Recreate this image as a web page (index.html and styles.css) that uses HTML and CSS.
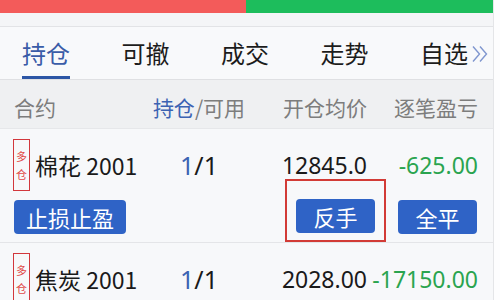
FILE: index.html
```html
<!DOCTYPE html>
<html lang="zh">
<head>
<meta charset="utf-8">
<link rel="stylesheet" href="styles.css">
</head>
<body>
<div class="page">
  <div class="topbar">
    <div class="buy"></div>
    <div class="sell"></div>
  </div>
  <div class="band"></div>
  <nav class="tabs">
    <div class="tab active">持仓</div>
    <div class="tab">可撤</div>
    <div class="tab">成交</div>
    <div class="tab">走势</div>
    <div class="tab">自选<svg class="more" width="18" height="18" viewBox="0 0 18 18"><path d="M2 1.5 L8.5 9 L2 16.5 M9 1.5 L15.5 9 L9 16.5" fill="none" stroke="#7f96cf" stroke-width="1.4"/></svg></div>
  </nav>
  <div class="head grid">
    <div class="c1">合约</div>
    <div class="c2"><span class="blue">持仓</span>/可用</div>
    <div class="c3">开仓均价</div>
    <div class="c4">逐笔盈亏</div>
  </div>
  <div class="row">
    <div class="grid line">
      <div class="c1 name"><span class="tag">多<br>仓</span>棉花 2001</div>
      <div class="c2 num"><span class="blue">1</span>/1</div>
      <div class="c3 num">12845.0</div>
      <div class="c4 num green">-625.00</div>
    </div>
    <div class="actions">
      <button class="btn wide">止损止盈</button>
      <div class="spacer"></div>
      <div class="hl"><button class="btn">反手</button></div>
      <button class="btn">全平</button>
    </div>
  </div>
  <div class="row">
    <div class="grid line">
      <div class="c1 name"><span class="tag">多<br>仓</span>焦炭 2001</div>
      <div class="c2 num"><span class="blue">1</span>/1</div>
      <div class="c3 num">2028.00</div>
      <div class="c4 num green">-17150.00</div>
    </div>
  </div>
</div>
</body>
</html>
```

FILE: styles.css
```css
* { box-sizing: border-box; margin: 0; padding: 0; }
html, body { background: #fdfdfe; }
body {
  width: 500px;
  height: 300px;
  overflow: hidden;
  font-family: "Noto Sans CJK SC", "Noto Sans", sans-serif;
  color: #1a1a1a;
}
.page {
  width: 494px;
  height: 300px;
  background: #f7f8fa;
  border-right: 1px solid #e4e5e8;
}
.topbar { display: flex; height: 13px; }
.buy { width: 246px; background: #f35b5a; }
.sell { flex: 1; background: #1dbd5c; }
.band { height: 14px; background: #f4f5f7; border-bottom: 1px solid #e2e3e6; }
.tabs {
  display: flex;
  height: 53px;
  padding-left: 22px;
  border-bottom: 1px solid #dfe0e3;
  background: #f8f9fb;
}
.tab {
  flex: 0 0 auto;
  width: 99.5px;
  font-size: 24px;
  line-height: 52px;
  color: #1c1c1c;
  position: relative;
  white-space: nowrap;
  display: flex;
  align-items: center;
}
.tab.active { color: #3a5ca8; }
.tab.active::after {
  content: "";
  position: absolute;
  left: 0;
  width: 48px;
  bottom: 0;
  height: 3px;
  background: #2c56a6;
}
.more { margin-left: 3px; margin-top: 2px; }
.grid {
  display: grid;
  grid-template-columns: 136px 98px 119px 111px;
  padding-left: 14px;
  align-items: center;
}
.c2 { text-align: center; }
.c3, .c4 { text-align: right; }
.head {
  height: 49px;
  padding-top: 5px;
  background: #eff0f2;
  color: #7d7d7d;
  font-size: 21px;
  border-bottom: 1px solid #e6e7ea;
  white-space: nowrap;
}
.blue { color: #3c63b3; }
.green { color: #2aa44f; }
.row {
  border-bottom: 1px solid #e4e5e8;
  padding-top: 10px;
}
.line { font-size: 23px; height: 52px; }
.num { font-family: "Noto Sans", sans-serif; font-size: 23px; white-space: nowrap; }
.c2.num { font-size: 25px; }
.name { display: flex; align-items: center; margin-left: -1px; }
.tag {
  display: inline-flex;
  align-items: center;
  justify-content: center;
  text-align: center;
  width: 17px;
  height: 52px;
  border: 1.5px solid #d2373c;
  color: #e04a48;
  font-size: 11px;
  line-height: 18px;
  margin-right: 5px;
}
.actions {
  display: flex;
  align-items: center;
  padding: 0 16px 0 14px;
  height: 51px;
}
.spacer { flex: 1; }
.btn {
  font-family: "Noto Sans CJK SC", sans-serif;
  background: #2f63c6;
  color: #ffffff;
  border: none;
  border-radius: 4px;
  width: 79px;
  height: 34px;
  font-size: 22px;
  line-height: 34px;
}
.btn.wide { width: 112px; }
.hl {
  border: 2px solid #d23b36;
  width: 101px;
  height: 63px;
  margin-top: -12px;
  display: flex;
  align-items: center;
  justify-content: center;
  margin-right: 12px;
  padding-top: 10px;
}
```
